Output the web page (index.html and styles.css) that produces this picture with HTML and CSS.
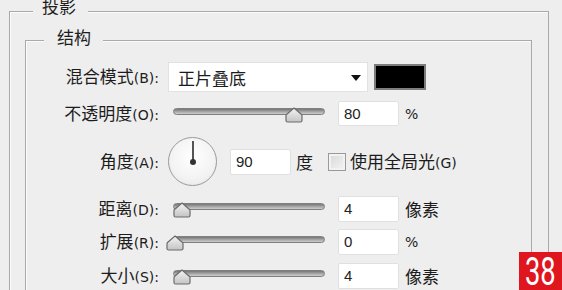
FILE: index.html
```html
<!DOCTYPE html>
<html lang="zh-CN">
<head>
<meta charset="utf-8">
<title>投影</title>
<link rel="stylesheet" href="styles.css">
</head>
<body>
<div class="group outer">
  <span class="legend legend-outer">投影</span>
  <div class="group inner">
    <span class="legend legend-inner">结构</span>

    <div class="row r1">
      <div class="lbl">混合模式<span class="lat">(B):</span></div>
      <div class="ctrl">
        <div class="select"><span class="sel-text">正片叠底</span>
          <svg class="arrow" width="10" height="6" viewBox="0 0 10 6"><polygon points="0,0 10,0 5,6" fill="#111"/></svg>
        </div>
        <div class="swatch"></div>
      </div>
    </div>

    <div class="row r2">
      <div class="lbl">不透明度<span class="lat">(O):</span></div>
      <div class="ctrl">
        <div class="slider"><div class="track"></div>
          <svg class="thumb" style="left:117px" width="18" height="16" viewBox="0 0 18 16"><defs><linearGradient id="tg1" x1="0" y1="0" x2="0" y2="1"><stop offset="0" stop-color="#f4f4f4"/><stop offset="1" stop-color="#c4c4c4"/></linearGradient></defs><path d="M9 1 L16.5 7.5 Q17 8 17 9 L17 13.5 Q17 15 15.5 15 L2.5 15 Q1 15 1 13.5 L1 9 Q1 8 1.5 7.5 Z" fill="url(#tg1)" stroke="#6d6d6d" stroke-width="1.2"/></svg>
        </div>
        <div class="field">80</div>
        <span class="unit">%</span>
      </div>
    </div>

    <div class="row r3">
      <div class="lbl">角度<span class="lat">(A):</span></div>
      <div class="ctrl">
        <div class="dial"><span class="hand"></span><span class="dot"></span></div>
        <div class="field f90">90</div>
        <span class="unit deg">度</span>
        <span class="check"></span>
        <span class="chk-lbl">使用全局光<span class="lat">(G)</span></span>
      </div>
    </div>

    <div class="row r4">
      <div class="lbl">距离<span class="lat">(D):</span></div>
      <div class="ctrl">
        <div class="slider"><div class="track"></div>
          <svg class="thumb" style="left:5px" width="18" height="16" viewBox="0 0 18 16"><defs><linearGradient id="tg2" x1="0" y1="0" x2="0" y2="1"><stop offset="0" stop-color="#f4f4f4"/><stop offset="1" stop-color="#c4c4c4"/></linearGradient></defs><path d="M9 1 L16.5 7.5 Q17 8 17 9 L17 13.5 Q17 15 15.5 15 L2.5 15 Q1 15 1 13.5 L1 9 Q1 8 1.5 7.5 Z" fill="url(#tg2)" stroke="#6d6d6d" stroke-width="1.2"/></svg>
        </div>
        <div class="field">4</div>
        <span class="unit">像素</span>
      </div>
    </div>

    <div class="row r5">
      <div class="lbl">扩展<span class="lat">(R):</span></div>
      <div class="ctrl">
        <div class="slider"><div class="track"></div>
          <svg class="thumb" style="left:-2px" width="18" height="16" viewBox="0 0 18 16"><defs><linearGradient id="tg3" x1="0" y1="0" x2="0" y2="1"><stop offset="0" stop-color="#f4f4f4"/><stop offset="1" stop-color="#c4c4c4"/></linearGradient></defs><path d="M9 1 L16.5 7.5 Q17 8 17 9 L17 13.5 Q17 15 15.5 15 L2.5 15 Q1 15 1 13.5 L1 9 Q1 8 1.5 7.5 Z" fill="url(#tg3)" stroke="#6d6d6d" stroke-width="1.2"/></svg>
        </div>
        <div class="field">0</div>
        <span class="unit">%</span>
      </div>
    </div>

    <div class="row r6">
      <div class="lbl">大小<span class="lat">(S):</span></div>
      <div class="ctrl">
        <div class="slider"><div class="track"></div>
          <svg class="thumb" style="left:5px" width="18" height="16" viewBox="0 0 18 16"><defs><linearGradient id="tg4" x1="0" y1="0" x2="0" y2="1"><stop offset="0" stop-color="#f4f4f4"/><stop offset="1" stop-color="#c4c4c4"/></linearGradient></defs><path d="M9 1 L16.5 7.5 Q17 8 17 9 L17 13.5 Q17 15 15.5 15 L2.5 15 Q1 15 1 13.5 L1 9 Q1 8 1.5 7.5 Z" fill="url(#tg4)" stroke="#6d6d6d" stroke-width="1.2"/></svg>
        </div>
        <div class="field">4</div>
        <span class="unit">像素</span>
      </div>
    </div>
  </div>
</div>
<div class="badge"><span class="badge-num">38</span></div>
</body>
</html>
```

FILE: styles.css
```css
html, body {
  margin: 0;
  padding: 0;
}
body {
  width: 562px;
  height: 290px;
  overflow: hidden;
  position: relative;
  background: #eeeeee;
  color: #1c1c1c;
  font-family: "Noto Sans CJK SC", "Noto Sans", sans-serif;
  font-size: 17px;
}
.group {
  position: relative;
  box-sizing: border-box;
  border: 1px solid #a9a9a9;
  box-shadow: inset 1px 1px 0 #fbfbfb;
}
.outer {
  margin: 11px 0 0 9px;
  width: 540px;
  height: 279px;
  border-bottom: none;
}
.inner {
  margin: 28px 0 0 15px;
  width: 507px;
  height: 250px;
  border-bottom: none;
  padding-top: 21px;
}
.legend {
  position: absolute;
  background: #eeeeee;
  line-height: 20px;
  font-size: 17px;
  color: #1c1c1c;
}
.legend-outer {
  left: 23px;
  top: -16px;
  padding: 0 12px 0 9px;
}
.legend-inner {
  left: 18px;
  top: -14px;
  padding: 0 12px 0 13px;
}
.row {
  display: grid;
  grid-template-columns: 133px 1fr;
  column-gap: 9px;
  align-items: center;
}
.r1 { height: 30px; }
.r2 { height: 25px; margin-top: 9px; }
.r3 { height: 48px; margin-top: 11px; }
.r4 { height: 26px; margin-top: 11px; }
.r5 { height: 26px; margin-top: 7px; }
.r6 { height: 26px; margin-top: 8px; }
.lbl {
  text-align: right;
  white-space: nowrap;
  line-height: 20px;
}
.lat {
  font-family: "DejaVu Sans", sans-serif;
  font-size: 14px;
  letter-spacing: 0;
}
.ctrl {
  display: flex;
  align-items: center;
  height: 100%;
}
.select {
  box-sizing: border-box;
  width: 200px;
  height: 30px;
  background: #ffffff;
  border: 1px solid #e2e2e2;
  display: flex;
  align-items: center;
  justify-content: space-between;
  padding: 0 6px 0 9px;
  font-size: 17px;
}
.arrow {
  display: block;
  margin-top: 2px;
}
.swatch {
  box-sizing: border-box;
  width: 52px;
  height: 26px;
  margin-left: 6px;
  background: #000;
  border: 2px solid #7d7d7d;
}
.slider {
  position: relative;
  width: 163px;
  height: 100%;
}
.track {
  position: absolute;
  left: 5px;
  width: 152px;
  top: 50%;
  height: 7px;
  margin-top: -6px;
  box-sizing: border-box;
  border: 1px solid #7f7f7f;
  border-radius: 4px;
  background: linear-gradient(#767676, #a8a8a8 55%, #cdcdcd);
}
.thumb {
  position: absolute;
  top: 50%;
  margin-top: -7px;
  display: block;
}
.field {
  box-sizing: border-box;
  width: 61px;
  height: 25px;
  margin-left: 7px;
  background: #ffffff;
  border: 1px solid #e0e0e0;
  border-radius: 2px;
  font-family: "Liberation Sans", sans-serif;
  font-size: 15px;
  line-height: 23px;
  padding-left: 5px;
  color: #222;
}
.r4 .field, .r5 .field, .r6 .field { height: 26px; line-height: 24px; }
.unit {
  margin-left: 6px;
  font-size: 17px;
  line-height: 20px;
}
.r2 .unit, .r5 .unit {
  font-family: "DejaVu Sans", sans-serif;
  font-size: 14px;
}
.dial {
  position: relative;
  box-sizing: border-box;
  width: 49px;
  height: 49px;
  border-radius: 50%;
  border: 1px solid #9a9a9a;
  background: radial-gradient(circle at 50% 40%, #ffffff 0%, #f3f3f3 60%, #e2e2e2 100%);
}
.hand {
  position: absolute;
  left: 23px;
  top: 3px;
  width: 2px;
  height: 21px;
  background: #555;
}
.dot {
  position: absolute;
  left: 21px;
  top: 21px;
  width: 6px;
  height: 6px;
  border-radius: 50%;
  background: #333;
}
.f90 {
  width: 61px;
  height: 26px;
  margin-left: 13px;
  line-height: 24px;
}
.deg { margin-left: 5px; }
.check {
  box-sizing: border-box;
  width: 18px;
  height: 18px;
  margin-left: 15px;
  border: 1px solid #9a9a9a;
  background: linear-gradient(135deg, #d8d8d8, #f4f4f4);
  box-shadow: inset 0 0 0 2px #f2f2f2;
}
.chk-lbl {
  margin-left: 4px;
  line-height: 20px;
}
.badge {
  position: absolute;
  right: 0;
  bottom: 0;
  width: 43px;
  height: 38px;
  background: #e0161f;
  color: #fff;
  display: flex;
  align-items: center;
  justify-content: center;
  overflow: hidden;
}
.badge-num {
  font-family: Roboto, "Liberation Sans", sans-serif;
  font-size: 38px;
  line-height: 36px;
  display: inline-block;
  transform: scaleX(0.72);
  margin-top: 1px;
}
```
